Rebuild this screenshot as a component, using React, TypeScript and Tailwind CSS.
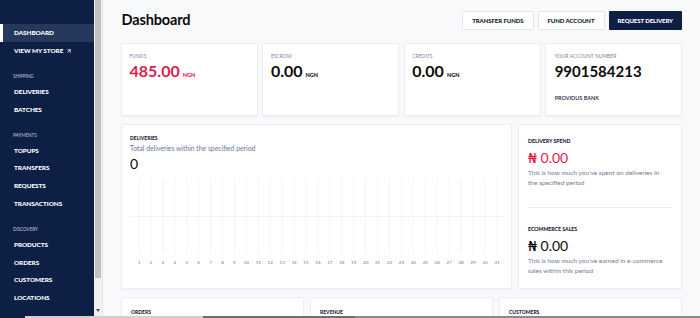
import React from 'react';
import { ArrowUpRight } from 'lucide-react';

type NavSection = { label?: string; items: { name: string; active?: boolean; external?: boolean }[] };

const NAV: NavSection[] = [
  { items: [{ name: 'DASHBOARD', active: true }, { name: 'VIEW MY STORE', external: true }] },
  { label: 'SHIPPING', items: [{ name: 'DELIVERIES' }, { name: 'BATCHES' }] },
  { label: 'PAYMENTS', items: [{ name: 'TOPUPS' }, { name: 'TRANSFERS' }, { name: 'REQUESTS' }, { name: 'TRANSACTIONS' }] },
  { label: 'DISCOVERY', items: [{ name: 'PRODUCTS' }, { name: 'ORDERS' }, { name: 'CUSTOMERS' }, { name: 'LOCATIONS' }] },
];

const Sidebar: React.FC = () => (
  <aside className="w-[94px] shrink-0 bg-[#0d1f45] pt-[24px]">
    {NAV.map((section, i) => (
      <div key={i} className={section.label ? 'mt-[11.5px]' : ''}>
        {section.label && (
          <div className="h-[12px] flex items-center pl-[13px] text-[4.7px] text-[#aab3c9] font-semibold tracking-tight">
            {section.label}
          </div>
        )}
        {section.items.map((item) => (
          <div
            key={item.name}
            className={`relative h-[17.7px] flex items-center pl-[14px] text-[6.4px] font-black text-white tracking-[-0.01em] ${
              item.active ? 'bg-[#26385c]' : ''
            }`}
          >
            {item.active && <span className="absolute left-0 top-0 bottom-0 w-[2.5px] bg-white" />}
            {item.name}
            {item.external && <ArrowUpRight className="ml-[3px] w-[6px] h-[6px]" strokeWidth={3} />}
          </div>
        ))}
      </div>
    ))}
  </aside>
);

const FakeScrollbar: React.FC = () => (
  <div className="w-[9px] shrink-0 bg-[#f1f1f1] flex flex-col items-center border-r border-[#e6e6e6]">
    <div className="w-[6px] h-[278px] bg-[#c1c1c1]" />
    <div className="flex-1" />
    <div className="mb-[4px] w-0 h-0 border-l-[2.5px] border-r-[2.5px] border-t-[3px] border-l-transparent border-r-transparent border-t-[#505050]" />
  </div>
);

const Button: React.FC<{ label: string; dark?: boolean }> = ({ label, dark }) => (
  <button
    className={`h-[19.5px] px-[9px] text-[6px] font-black uppercase tracking-[-0.01em] rounded-[1px] ${
      dark ? 'bg-[#0d1f45] text-white' : 'bg-white text-[#111827] border border-[#e4e6eb]'
    }`}
  >
    {label}
  </button>
);

const Card: React.FC<{ className?: string; children?: React.ReactNode }> = ({ className = '', children }) => (
  <div className={`bg-white border border-[#eceef2] rounded-[2px] shadow-[0_1px_2px_rgba(15,23,42,0.04)] ${className}`}>
    {children}
  </div>
);

const StatCard: React.FC<{ label: string; value: string; red?: boolean }> = ({ label, value, red }) => (
  <Card className="h-[73.5px] pl-[7.5px] pt-[9px]">
    <div className="text-[5px] text-[#7d86a0] leading-[6px]">{label}</div>
    <div className={`mt-[4px] flex items-baseline gap-[3px] ${red ? 'text-[#e5194d]' : 'text-[#0b0b0b]'}`}>
      <span className="text-[16px] font-bold leading-[16px]">{value}</span>
      <span className="text-[5.5px] font-black">NGN</span>
    </div>
  </Card>
);

const Chart: React.FC = () => {
  const days = Array.from({ length: 31 }, (_, i) => i + 1);
  const x0 = 9;
  const step = 11.93;
  return (
    <svg width="376" height="90" className="block">
      <line x1="0" y1="38.5" x2="376" y2="38.5" stroke="#f3f4f6" strokeWidth="1" />
      {days.map((d, i) => (
        <g key={d}>
          <line x1={x0 + i * step} y1="0" x2={x0 + i * step} y2="76" stroke="#f3f4f6" strokeWidth="1" />
          <text
            x={x0 + i * step}
            y="86"
            textAnchor="middle"
            fontSize="4.6"
            fill="#6f7891"
            fontFamily="Lato, sans-serif"
          >
            {d}
          </text>
        </g>
      ))}
    </svg>
  );
};

const MoneyBlock: React.FC<{ label: string; red?: boolean; text: string }> = ({ label, red, text }) => (
  <div>
    <div className="text-[5.2px] font-black text-[#1a2340] leading-[6px]">{label}</div>
    <div className={`mt-[6px] text-[14px] leading-[16px] ${red ? 'text-[#e5194d]' : 'text-[#0b0b0b]'}`}>
      <span className="font-['DejaVu_Sans',sans-serif]">₦</span> 0.00
    </div>
    <div className="mt-[2.5px] text-[6.5px] leading-[9.7px] text-[#737c95] w-[140px]">{text}</div>
  </div>
);

export default function App() {
  return (
    <div className="w-[700px] h-[318px] overflow-hidden flex flex-col font-['Lato',sans-serif]">
      <div className="flex h-[316px] overflow-hidden">
        <Sidebar />
        <FakeScrollbar />
        <main className="flex-1 bg-[#f8f9fb] px-[18px] pt-[10.5px]">
          <div className="flex items-center justify-between h-[19.5px]">
            <h1 className="ml-[0.5px] text-[14.5px] font-bold text-[#0b0b0b] tracking-[-0.01em]">Dashboard</h1>
            <div className="flex gap-[4px]">
              <Button label="TRANSFER FUNDS" />
              <Button label="FUND ACCOUNT" />
              <Button label="REQUEST DELIVERY" dark />
            </div>
          </div>

          <div className="mt-[12.5px] grid grid-cols-4 gap-[4.5px]">
            <StatCard label="FUNDS" value="485.00" red />
            <StatCard label="ESCROW" value="0.00" />
            <StatCard label="CREDITS" value="0.00" />
            <Card className="h-[73.5px] pl-[8.5px] pt-[9px]">
              <div className="text-[5px] text-[#7d86a0] leading-[6px]">YOUR ACCOUNT NUMBER</div>
              <div className="mt-[4px] text-[15px] font-bold leading-[16px] text-[#0b0b0b]">9901584213</div>
              <div className="mt-[15px] text-[5.5px] font-semibold text-[#1a2340]">PROVIDUS BANK</div>
            </Card>
          </div>

          <div className="mt-[8px] flex gap-[6px] h-[165px]">
            <Card className="flex-1 pl-[8px] pt-[10px]">
              <div className="text-[5px] font-black text-[#1a2340] leading-[6px]">DELIVERIES</div>
              <div className="mt-[2.5px] text-[6.8px] leading-[9px] text-[#6b7799]">
                Total deliveries within the specified period
              </div>
              <div className="mt-[3.5px] text-[14px] leading-[16px] text-[#0b0b0b]">0</div>
              <div className="mt-[5.5px]">
                <Chart />
              </div>
            </Card>
            <Card className="w-[164px] px-[9px] pt-[12.5px]">
              <MoneyBlock label="DELIVERY SPEND" red text="This is how much you've spent on deliveries in the specified period" />
              <div className="mt-[20px] h-px bg-[#eceef2]" />
              <div className="mt-[17.5px]">
                <MoneyBlock label="ECOMMERCE SALES" text="This is how much you've earned in e-commerce sales within this period" />
              </div>
            </Card>
          </div>

          <div className="mt-[8px] grid grid-cols-3 gap-[6px]">
            {['ORDERS', 'REVENUE', 'CUSTOMERS'].map((label) => (
              <Card key={label} className="h-[40px] pl-[9px] pt-[11px]">
                <div className="text-[5px] font-black text-[#1a2340] leading-[6px]">{label}</div>
              </Card>
            ))}
          </div>
        </main>
      </div>
      <div className="flex h-[2px]">
        <div className="w-[25px] bg-[#0d1f45]" />
        <div className="w-[178px] bg-[#cfcfcf]" />
        <div className="w-[152px] bg-[#6f6f6f]" />
        <div className="flex-1 bg-[#8a8a8a]" />
      </div>
    </div>
  );
}
